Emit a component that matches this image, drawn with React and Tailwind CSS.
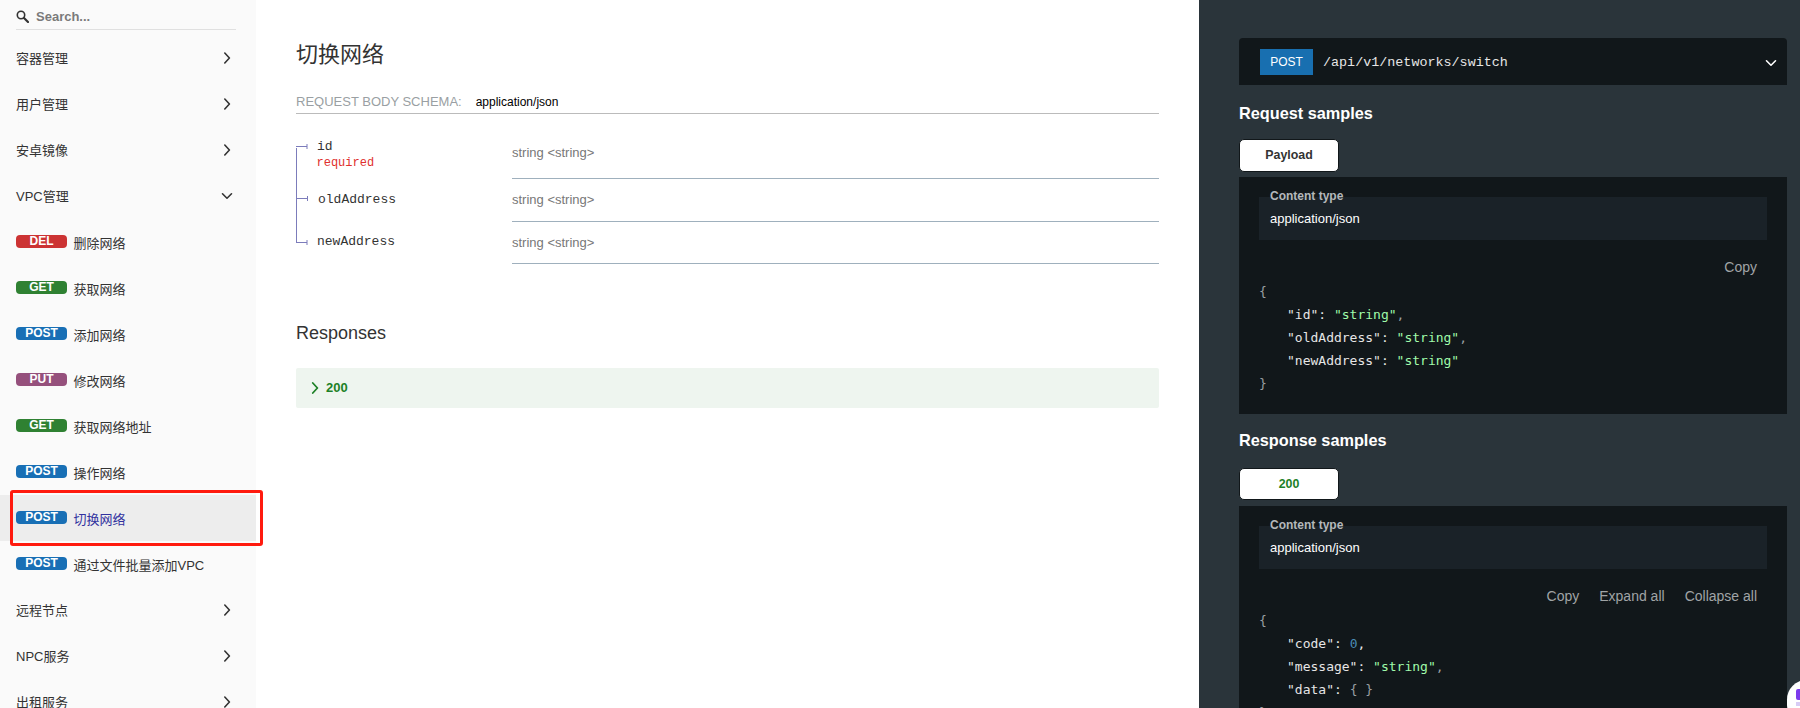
const SANS = "font-['Liberation_Sans','Noto_Sans_CJK_SC',sans-serif]";

function Chevron({ down = false, className = "", weight = "1.6" }) {
  return (
    <svg viewBox="0 0 12 12" className={`h-[12px] w-[12px] ${className}`} fill="none" stroke="currentColor" strokeWidth={weight} strokeLinecap="round" strokeLinejoin="round">
      {down ? <polyline points="1.5,3.8 6,8.2 10.5,3.8" /> : <polyline points="3.8,1 8.4,6 3.8,11" />}
    </svg>
  );
}

function SearchIcon() {
  return (
    <svg viewBox="0 0 13 13" className="h-[13px] w-[13px] shrink-0 text-[#333]" fill="none" stroke="currentColor">
      <circle cx="5" cy="5" r="3.7" strokeWidth="1.6" />
      <line x1="8" y1="8" x2="12" y2="12" strokeWidth="2.2" strokeLinecap="round" />
    </svg>
  );
}

function Group({ label, open = false }) {
  return (
    <div className="flex h-[46px] items-center justify-between pl-4 pr-[23px] pt-[2px] text-[13px] text-[#333]">
      <span>{label}</span>
      <Chevron down={open} className="-mt-[3px] text-[#333]" />
    </div>
  );
}

const badgeColors = {
  DEL: "bg-[#cc3333]",
  GET: "bg-[#2f8132]",
  POST: "bg-[#186fb5]",
  PUT: "bg-[#95507c]",
};

function Endpoint({ method, label, active = false }) {
  return (
    <div className={`flex h-[46px] items-center pl-4 pt-[2px] text-[13px] ${active ? "bg-[#ededed] text-[#32329f]" : "text-[#333]"}`}>
      <span className={`mb-[3px] flex h-[13px] w-[51px] shrink-0 items-center justify-center rounded-[4px] text-[12px] font-bold leading-[13px] text-white ${badgeColors[method]}`}>
        {method}
      </span>
      <span className="ml-[6.5px] mt-[2px]">{label}</span>
    </div>
  );
}

function Sidebar() {
  return (
    <aside className="relative h-full w-64 shrink-0 overflow-hidden bg-[#fafafa]">
      <div className="mx-4 flex h-[30px] w-[220px] items-center gap-[7px] border-b-[1px] border-[#e0e0e0] pt-[4px]">
        <SearchIcon />
        <span className="text-[13px] font-bold text-[#7a7a7a]">Search...</span>
      </div>
      <div className="mt-[5px]">
        <Group label="容器管理" />
        <Group label="用户管理" />
        <Group label="安卓镜像" />
        <Group label="VPC管理" open />
        <Endpoint method="DEL" label="删除网络" />
        <Endpoint method="GET" label="获取网络" />
        <Endpoint method="POST" label="添加网络" />
        <Endpoint method="PUT" label="修改网络" />
        <Endpoint method="GET" label="获取网络地址" />
        <Endpoint method="POST" label="操作网络" />
        <Endpoint method="POST" label="切换网络" active />
        <Endpoint method="POST" label="通过文件批量添加VPC" />
        <Group label="远程节点" />
        <Group label="NPC服务" />
        <Group label="出租服务" />
      </div>
    </aside>
  );
}

function Field({ name, nameClass = "", required = false, rowClass, typeClass }) {
  return (
    <div className={`flex ${rowClass}`}>
      <div className={`w-[216px] shrink-0 font-['Liberation_Mono',monospace] text-[13px] leading-[15px] text-[#333] ${nameClass}`}>
        <div>{name}</div>
        {required ? <div className="-ml-[0.5px] mt-[2px] text-[12px] text-[#e0302d]">required</div> : null}
      </div>
      <div className={`flex-1 border-b border-[#9fb0bd] text-[13px] text-[#777] ${typeClass}`}>string &lt;string&gt;</div>
    </div>
  );
}

function Middle() {
  return (
    <main className="h-full w-[943px] shrink-0 overflow-hidden bg-white pl-10 pr-10">
      <h2 className="mt-[41px] text-[22px] font-normal leading-[28px] text-[#333]">切换网络</h2>
      <div className="mt-[24px] flex h-[21px] items-center border-b border-[#bbb] pb-[2px] text-[13px]">
        <span className="text-[#9a9fa3]">REQUEST BODY SCHEMA:</span>
        <span className="ml-[14px] text-[12px] text-black">application/json</span>
      </div>
      <div className="relative mt-[19px]">
        <svg className="absolute left-0 top-0 h-[114px] w-[14px] text-[#7c7cbb]" viewBox="0 0 14 114" fill="none" stroke="currentColor">
          <path d="M0 13.5H11M11 11V16M0.5 15V109M0 65.5H11.5M11.5 63V68M0 109.5H11M11 107V112" />
        </svg>
        <Field name="id" required nameClass="pl-[21px] pt-[6px]" rowClass="h-[46px]" typeClass="pt-[10px]" />
        <Field name="oldAddress" nameClass="pl-[22px] pt-[13px]" rowClass="h-[43px]" typeClass="pt-[11px]" />
        <Field name="newAddress" nameClass="pl-[21px] pt-[12px]" rowClass="h-[42px]" typeClass="pt-[11px]" />
      </div>
      <h3 className="mt-[57px] text-[18px] font-normal leading-[24px] text-[#333]">Responses</h3>
      <div className="mt-[23px] flex h-[40px] items-center rounded-[2px] bg-[#eef5ef] pl-[13px] text-[13px] font-bold text-[#1d8127]">
        <Chevron weight="1.8" />
        <span className="ml-[5px]">200</span>
      </div>
    </main>
  );
}

function CodeLine({ indent = false, children }) {
  return <div className={`h-[23px] leading-[23px] ${indent ? "pl-[28px]" : ""}`}>{children}</div>;
}

const Str = ({ children }) => <span className="text-[#a0fbaa]">{children}</span>;
const Key = ({ children }) => <span className="text-[#e6e6e6]">{children}</span>;

function SamplePanel({ actions, children }) {
  return (
    <div className="bg-[#11171a] px-5 pb-[19px] pt-5">
      <div className="relative flex h-[43px] items-center bg-[#1a2228] pl-[11px] text-[13px] text-white">
        <span className="absolute -top-[8px] left-[11px] text-[12px] font-bold leading-[14px] text-[#b4b8ba]">Content type</span>
        <span className="mt-[1px]">application/json</span>
      </div>
      <div className="mt-[17px] flex h-[20px] items-center justify-end gap-5 pr-[10px] text-[14px] text-[#a0a4a6]">
        {actions.map((action) => (
          <span key={action}>{action}</span>
        ))}
      </div>
      <div className="mt-[3px] font-['DejaVu_Sans_Mono',monospace] text-[13px] text-[#9a9fa2]">{children}</div>
    </div>
  );
}

function SampleTab({ children, className = "" }) {
  return (
    <div className={`flex w-[100px] items-center justify-center rounded-[5px] border border-[#11171a] bg-white text-[12.4px] font-bold ${className}`}>
      {children}
    </div>
  );
}

function RightPanel() {
  return (
    <section className="relative h-full min-w-0 flex-1 overflow-hidden bg-[#2a343a] pl-10 pr-[13px] pt-[38px]">
      <div className="flex h-[47px] items-center rounded-t-[4px] bg-[#11171a] pl-[21px] pr-[10px]">
        <span className="flex h-[26px] w-[53px] items-center justify-center bg-[#186fb0] pt-[1px] text-[12px] text-white">POST</span>
        <span className="ml-[10px] mt-[3px] flex-1 font-['Liberation_Mono',monospace] text-[13.4px] text-[#e6e6e6]">/api/v1/networks/switch</span>
        <Chevron down className="mt-[2px] text-white" />
      </div>
      <h3 className="mt-[18px] text-[16.3px] font-bold leading-[20px] text-white">Request samples</h3>
      <SampleTab className="mt-[16px] h-[33px] text-[#333]">Payload</SampleTab>
      <div className="mt-[5px]">
        <SamplePanel actions={["Copy"]}>
          <CodeLine>{"{"}</CodeLine>
          <CodeLine indent><Key>"id"</Key><Key>:</Key> <Str>"string"</Str>,</CodeLine>
          <CodeLine indent><Key>"oldAddress"</Key><Key>:</Key> <Str>"string"</Str>,</CodeLine>
          <CodeLine indent><Key>"newAddress"</Key><Key>:</Key> <Str>"string"</Str></CodeLine>
          <CodeLine>{"}"}</CodeLine>
        </SamplePanel>
      </div>
      <h3 className="mt-[16px] text-[16.3px] font-bold leading-[20px] text-white">Response samples</h3>
      <SampleTab className="mt-[18px] h-[32px] text-[#1d8127]">200</SampleTab>
      <div className="mt-[6px]">
        <SamplePanel actions={["Copy", "Expand all", "Collapse all"]}>
          <CodeLine>{"{"}</CodeLine>
          <CodeLine indent><Key>"code"</Key><Key>:</Key> <span className="text-[#4a8bb5]">0</span><Key>,</Key></CodeLine>
          <CodeLine indent><Key>"message"</Key><Key>:</Key> <Str>"string"</Str>,</CodeLine>
          <CodeLine indent><Key>"data"</Key><Key>:</Key> {"{ }"}</CodeLine>
          <CodeLine>{"}"}</CodeLine>
        </SamplePanel>
      </div>
      {/* chat widget poking in from the corner */}
      <div className="absolute -right-[26px] top-[680px] h-[44px] w-[39px] overflow-hidden rounded-full bg-white">
        <div className="ml-[9px] mt-[9px] h-[11px] w-[12px] rounded-[2px] bg-[#7c3aed]" />
        <div className="ml-[9px] mt-[2px] h-[4px] w-[6px] bg-[#d8ccf5]" />
      </div>
    </section>
  );
}

export default function App() {
  return (
    <div className={`relative flex h-screen w-full overflow-hidden bg-white ${SANS}`}>
      <Sidebar />
      <Middle />
      <RightPanel />
      {/* red annotation box around the selected item */}
      <div className="pointer-events-none absolute left-[10px] top-[490px] h-[56px] w-[253px] rounded-[3px] border-[3px] border-[#ff1a0e]" />
    </div>
  );
}
